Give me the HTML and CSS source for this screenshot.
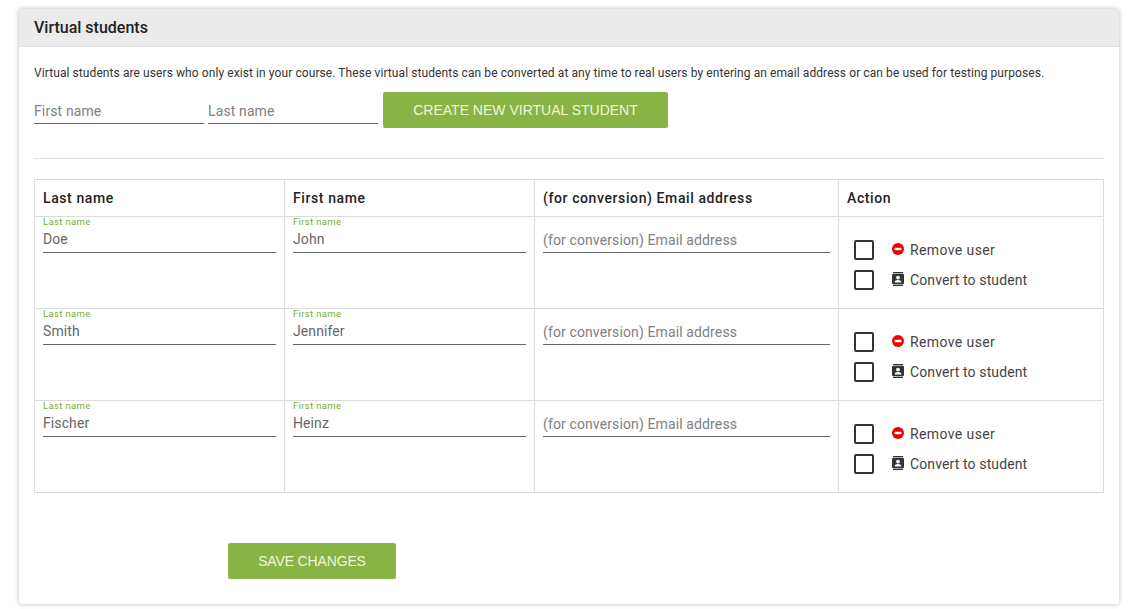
FILE: index.html
```html
<!DOCTYPE html>
<html lang="en">
<head>
<meta charset="utf-8">
<title>Virtual students</title>
<link rel="stylesheet" href="styles.css">
</head>
<body>
<svg class="defs" width="0" height="0" aria-hidden="true">
  <symbol id="i-remove" viewBox="0 0 12 12"><circle cx="6" cy="6" r="6" fill="#f00000"/><rect x="2.6" y="4.8" width="6.8" height="2.4" fill="#fff"/></symbol>
  <symbol id="i-convert" viewBox="0 0 12 14"><rect x="1" y="0" width="10" height="1.4" fill="#333"/><rect x="1" y="12.6" width="10" height="1.4" fill="#333"/><rect x="0" y="2" width="12" height="10" rx="1" fill="#333"/><circle cx="6" cy="5.6" r="1.9" fill="#fff"/><path d="M2.6 10.6c0-1.8 1.6-2.6 3.4-2.6s3.4.8 3.4 2.6z" fill="#fff"/></symbol>
</svg>
<main class="card">
  <h1 class="card-title">Virtual students</h1>
  <div class="card-body">
    <p class="intro">Virtual students are users who only exist in your course. These virtual students can be converted at any time to real users by entering an email address or can be used for testing purposes.</p>
    <div class="create-row">
      <input class="line-input short" placeholder="First name">
      <input class="line-input short" placeholder="Last name">
      <button class="btn btn-create" type="button">CREATE NEW VIRTUAL STUDENT</button>
    </div>
    <hr class="divider">
    <table class="students">
      <thead>
        <tr><th class="col-a">Last name</th><th class="col-a">First name</th><th class="col-b">(for conversion) Email address</th><th>Action</th></tr>
      </thead>
      <tbody>
        <tr>
          <td><label class="field"><span class="float">Last name</span><input class="line-input filled" value="Doe"></label></td>
          <td><label class="field"><span class="float">First name</span><input class="line-input filled" value="John"></label></td>
          <td><label class="field"><span class="float hidden">Email</span><input class="line-input empty" placeholder="(for conversion) Email address"></label></td>
          <td class="actions">
            <div class="action"><span class="box"></span><svg class="ico ico-r"><use href="#i-remove"/></svg><span class="remove-label">Remove user</span></div>
            <div class="action"><span class="box"></span><svg class="ico ico-c"><use href="#i-convert"/></svg><span>Convert to student</span></div>
          </td>
        </tr>
        <tr>
          <td><label class="field"><span class="float">Last name</span><input class="line-input filled" value="Smith"></label></td>
          <td><label class="field"><span class="float">First name</span><input class="line-input filled" value="Jennifer"></label></td>
          <td><label class="field"><span class="float hidden">Email</span><input class="line-input empty" placeholder="(for conversion) Email address"></label></td>
          <td class="actions">
            <div class="action"><span class="box"></span><svg class="ico ico-r"><use href="#i-remove"/></svg><span class="remove-label">Remove user</span></div>
            <div class="action"><span class="box"></span><svg class="ico ico-c"><use href="#i-convert"/></svg><span>Convert to student</span></div>
          </td>
        </tr>
        <tr>
          <td><label class="field"><span class="float">Last name</span><input class="line-input filled" value="Fischer"></label></td>
          <td><label class="field"><span class="float">First name</span><input class="line-input filled" value="Heinz"></label></td>
          <td><label class="field"><span class="float hidden">Email</span><input class="line-input empty" placeholder="(for conversion) Email address"></label></td>
          <td class="actions">
            <div class="action"><span class="box"></span><svg class="ico ico-r"><use href="#i-remove"/></svg><span class="remove-label">Remove user</span></div>
            <div class="action"><span class="box"></span><svg class="ico ico-c"><use href="#i-convert"/></svg><span>Convert to student</span></div>
          </td>
        </tr>
      </tbody>
    </table>
    <div class="save-row"><button class="btn btn-save" type="button">SAVE CHANGES</button></div>
  </div>
</main>
</body>
</html>
```
FILE: styles.css
```css
* { box-sizing: border-box; }
html, body { margin: 0; padding: 0; background: #fff; height: 609px; overflow: hidden; }
body { font-family: Roboto, "Liberation Sans", sans-serif; color: #333; padding: 9px 21px 0 19px; }
.defs { position: absolute; }
.card { height: 595px; border-radius: 3px; background: #fff; box-shadow: 0 0 5px rgba(0,0,0,.28); overflow: hidden; }
.card-title { margin: 0; height: 38px; padding: 0 15px; background: #ebebeb; border-bottom: 1px solid #e0e0e0; font-size: 16px; font-weight: 500; line-height: 37px; color: #222; }
.card-body { padding: 19px 15px 0; }
.intro { margin: 0; font-size: 12px; line-height: 14px; height: 14px; color: #333; letter-spacing: .085px; white-space: nowrap; }
.create-row { display: flex; align-items: flex-start; margin-top: 12px; height: 36px; }
.line-input { display: block; width: 100%; height: 24px; padding: 0; border: 0; border-bottom: 1px solid #666; outline: 0; background: transparent; font: 14px Roboto, "Liberation Sans", sans-serif; color: #666; letter-spacing: .12px; border-radius: 0; }
.line-input::placeholder { color: #808080; opacity: 1; }
.line-input.short { width: 170px; margin-right: 4px; margin-top: 8px; padding-bottom: 2px; }
.line-input.filled { padding-bottom: 4px; letter-spacing: .1px; }
.line-input.empty { padding-bottom: 2px; }
.btn { border: 0; border-radius: 2px; background: #88b445; color: #f0f5dc; font: 14px "Liberation Sans", Arial, sans-serif; padding: 0; height: 36px; }
.btn-create { width: 285px; margin-left: 1px; }
.btn-save { width: 168px; letter-spacing: -.15px; }
.divider { margin: 30px 0 20px; height: 1px; border: 0; background: #e0e0e0; }
.students { width: 1070px; table-layout: fixed; border-collapse: collapse; }
.students th, .students td { border: 1px solid #dcdcdc; padding: 0 8px; vertical-align: top; }
.students th { height: 37px; text-align: left; font-size: 14px; font-weight: 500; color: #222; letter-spacing: .6px; vertical-align: middle; }
.col-a { width: 250px; }
.col-b { width: 304px; }
.students td { height: 92px; }
.field { display: block; }
.float { display: block; height: 12px; font-size: 9.5px; line-height: 9px; color: #78ab33; letter-spacing: .35px; }
.float.hidden { visibility: hidden; }
.actions { padding-top: 18px !important; padding-left: 15px !important; }
.action { display: flex; align-items: center; height: 30px; font-size: 14px; color: #444; letter-spacing: .12px; white-space: nowrap; }
.remove-label { letter-spacing: .39px; }
.box { flex: none; width: 20px; height: 20px; border: 2px solid #333; border-radius: 2px; margin-right: 18px; }
.ico { flex: none; margin-right: 6px; position: relative; top: -1px; }
.ico-r { width: 12px; height: 12px; }
.ico-c { width: 12px; height: 14px; }
.save-row { padding: 50px 0 0 194px; }
```
